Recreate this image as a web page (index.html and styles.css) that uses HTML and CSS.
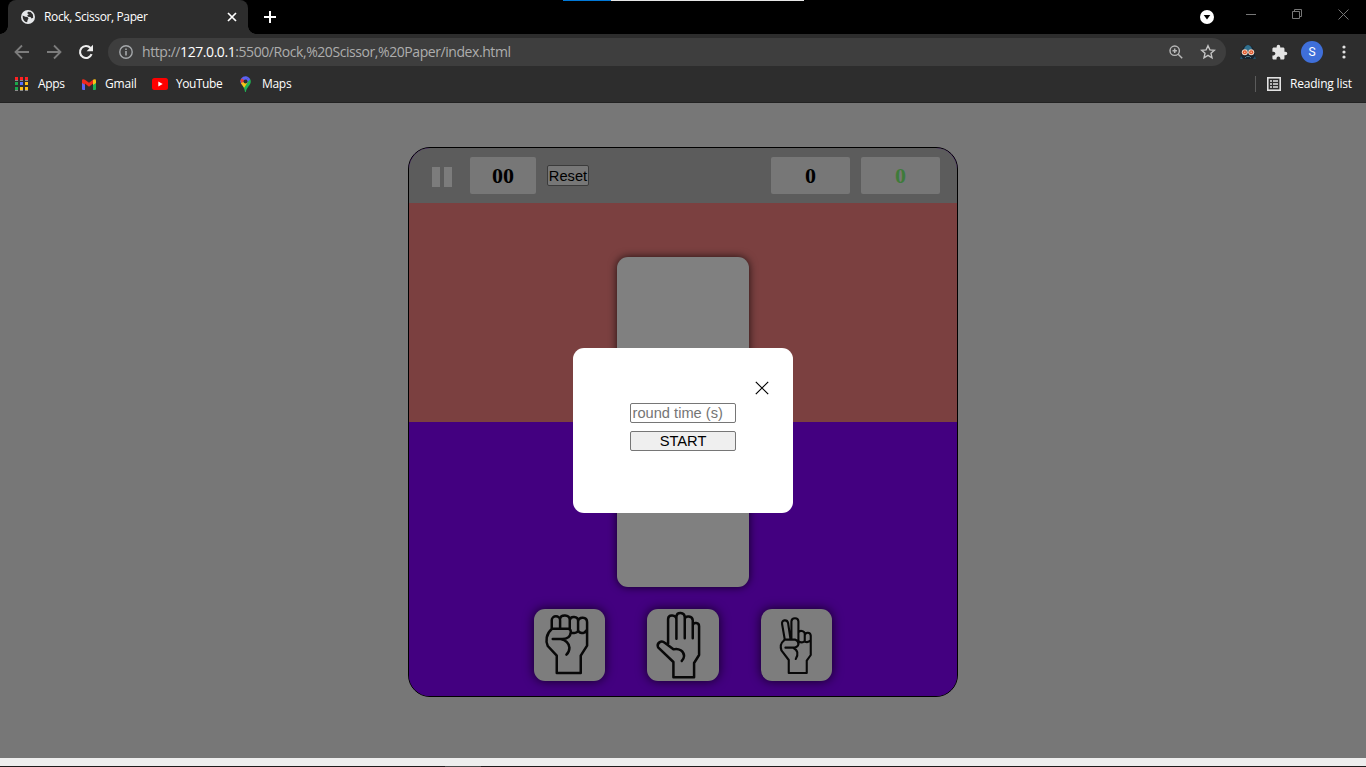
FILE: index.html
```html
<!DOCTYPE html>
<html lang="en">
<head>
<meta charset="utf-8">
<title>Rock, Scissor, Paper</title>
<link rel="stylesheet" href="styles.css">
</head>
<body>
<header class="browser">
  <div class="tabstrip">
    <div class="tab">
      <svg class="tab-icon" viewBox="0 0 14 14"><circle cx="7" cy="7" r="7" fill="#e6e8ea"/><path d="M1.700 5.500l2.500 1.300 2.300.3 1 1.400-.8 1.300-.6 2.500C3.400 12 1.500 9.500 1.700 5.500zM7 1.700l2.700.3 2.200 2.500.3 3.200-1.700.8-1-1.500-2.500-.3-.8-1.300 1.600-1.100-1.600-1z" fill="#2d2d2d"/></svg>
      <span class="tab-title">Rock, Scissor, Paper</span>
      <svg class="tab-close" viewBox="0 0 10 10"><path d="M1 1l8 8M9 1L1 9" stroke="#fff" stroke-width="1.700"/></svg>
    </div>
    <svg class="newtab" viewBox="0 0 12 12"><path d="M6 0v12M0 6h12" stroke="#fff" stroke-width="2"/></svg>
    <div class="loadbar"></div>
    <div class="window-controls">
      <svg width="14" height="14" viewBox="0 0 14 14" class="media"><circle cx="7" cy="7" r="7" fill="#fff"/><path d="M3.700 5h6.600L7 9.500z" fill="#000"/></svg>
      <svg width="11" height="11" viewBox="0 0 11 11" class="ctl"><path d="M0 5.500h10"/></svg>
      <svg width="11" height="11" viewBox="0 0 11 11" class="ctl"><path d="M.5 2.500h7v7h-7zM2.500 2.500v-2h7v7h-2"/></svg>
      <svg width="11" height="11" viewBox="0 0 11 11" class="ctl"><path d="M.5.500l10 10M10.500.500l-10 10"/></svg>
    </div>
  </div>
  <div class="toolbar">
    <svg class="nav" viewBox="0 0 16 16"><path d="M15 8H2M8 1.500L1.500 8 8 14.500" fill="none" stroke="#7c7c7c" stroke-width="1.800"/></svg>
    <svg class="nav" viewBox="0 0 16 16"><path d="M1 8h13M8 1.500L14.500 8 8 14.500" fill="none" stroke="#7c7c7c" stroke-width="1.800"/></svg>
    <svg class="nav" viewBox="0 0 16 16"><path d="M13.600 10.200A6 6 0 1 1 12.500 4" fill="none" stroke="#eee" stroke-width="2.100"/><path d="M15 .8v6.400H8.600z" fill="#eee"/></svg>
    <div class="omnibox">
      <svg class="info" viewBox="0 0 14 14"><circle cx="7" cy="7" r="6.200" fill="none" stroke="#a5a8ab" stroke-width="1.400"/><path d="M7 6v4.600M7 3.400v1.600" stroke="#a5a8ab" stroke-width="1.600"/></svg>
      <span class="url">http://<b>127.0.0.1</b>:5500/Rock,%20Scissor,%20Paper/index.html</span>
      <svg class="mag" viewBox="0 0 14 14"><circle cx="5.700" cy="5.700" r="4.700" fill="none" stroke="#b8b8b8" stroke-width="1.400"/><path d="M9.200 9.200l4 4M5.700 3.500v4.400M3.500 5.700h4.400" stroke="#b8b8b8" stroke-width="1.500"/></svg>
      <svg class="star" viewBox="0 0 16 16"><path d="M8 1.700l1.900 4.200 4.500.4-3.400 3 1 4.500-4-2.400-4 2.400 1-4.500-3.400-3 4.500-.4z" fill="none" stroke="#c4c4c4" stroke-width="1.400"/></svg>
    </div>
    <svg class="ext" viewBox="0 0 16 14"><path d="M0 14L2.500 4C4 1 6 0 8 0s4 1 5.500 4L16 14z" fill="#17232f"/><path d="M4 4c1-3 2.500-4 4-4s3 1 4 4L8 6z" fill="#31708e"/><path d="M1 11l-1 3h3zM15 11l1 3h-3z" fill="#265066"/><circle cx="4.800" cy="7.200" r="3" fill="#f2d7c5"/><circle cx="11.200" cy="7.200" r="3" fill="#f2d7c5"/><circle cx="4.800" cy="7.200" r="2" fill="#e2552b"/><circle cx="11.200" cy="7.200" r="2" fill="#e2552b"/><circle cx="4.800" cy="7.200" r=".8" fill="#f9c9a8"/><circle cx="11.200" cy="7.200" r=".8" fill="#f9c9a8"/><path d="M5 13l1.500-1.500h3L11 13" stroke="#4c7485" fill="none"/></svg>
    <svg class="puzzle" viewBox="0 0 24 24"><path d="M20.500 11H19V7c0-1.100-.9-2-2-2h-4V3.500a2.500 2.500 0 0 0-5 0V5H4c-1.100 0-2 .9-2 2v3.800h1.500c1.500 0 2.700 1.200 2.700 2.700S5 16.200 3.500 16.200H2V20c0 1.100.9 2 2 2h3.800v-1.500c0-1.500 1.200-2.700 2.700-2.700s2.700 1.200 2.700 2.700V22H17c1.100 0 2-.9 2-2v-4h1.500a2.500 2.500 0 0 0 0-5z" fill="#e4e4e4"/></svg>
    <div class="avatar">S</div>
    <svg class="dots" viewBox="0 0 4 14"><g fill="#e0e0e0"><circle cx="2" cy="2" r="1.600"/><circle cx="2" cy="7" r="1.600"/><circle cx="2" cy="12" r="1.600"/></g></svg>
  </div>
  <nav class="bookmarks">
    <svg class="bm-apps" viewBox="0 0 13 14"><g><path d="M0 0h3v3H0zM5 0h3v3H5zM10 0h3v3h-3z" fill="#f22"/><path d="M0 5h3v3H0z" fill="#1ba94c"/><path d="M5 5h3v3H5z" fill="#5271ff"/><path d="M10 5h3v3h-3z" fill="#fbc116"/><path d="M0 10h3v3H0z" fill="#1ba94c"/><path d="M5 10h3v3H5zM10 10h3v3h-3z" fill="#fbc116"/><path d="M0 3h3v1H0zM5 3h3v1H5zM10 3h3v1h-3zM0 13h3v1H0zM5 13h3v1H5zM10 13h3v1h-3z" fill="#8b8b8b"/></g></svg>
    <span class="bm-text t-apps">Apps</span>
    <svg class="bm-gmail" viewBox="0 0 14 11"><path d="M0 2l3 2v7H1a1 1 0 0 1-1-1z" fill="#5b62f5"/><path d="M14 2l-3 2v7h2a1 1 0 0 0 1-1z" fill="#20b254"/><path d="M0 4V1.600C0 0 1.500-.3 3 .8l4 3 4-3v3.800L7 7.800 3 4.600v1.200z" fill="#f02a1d"/><path d="M11 .8C12.500-.3 14 0 14 1.600V4l-3 2z" fill="#fbc116"/></svg>
    <span class="bm-text t-gmail">Gmail</span>
    <svg class="bm-yt" viewBox="0 0 16 12"><rect width="16" height="12" rx="2.500" fill="#f00"/><path d="M6.300 3.400v5.200L10.700 6z" fill="#fff"/></svg>
    <span class="bm-text t-yt">YouTube</span>
    <svg class="bm-maps" viewBox="0 0 11 16"><path d="M.2 5.500A5.300 5.300 0 0 1 8.500 1.200L2 8.700A6 6 0 0 1 .2 5.500z" fill="#5b62f5"/><path d="M.4 4.200L2 2.400l2.500 2L1.500 7.700z" fill="#ea3c30"/><path d="M10.200 3.200c.4.700.6 1.500.6 2.300 0 4-4.200 5.400-4.900 10.200-.3.500-.7.400-.9 0C4.600 13 3.500 11 2 8.700z" fill="#20b254"/><path d="M8.500 1.200a5.300 5.300 0 0 1 1.700 2L6 8 4 6z" fill="#5b62f5"/><path d="M.8 7L4 6l3.500.5-3.300 5.200L2 8.700z" fill="#fbc116"/><circle cx="5.500" cy="5.400" r="2" fill="#2d2d2d"/></svg>
    <span class="bm-text t-maps">Maps</span>
    <div class="reading">
      <svg viewBox="0 0 14 14"><rect x=".8" y=".8" width="12.400" height="12.400" fill="none" stroke="#e2e2e2" stroke-width="1.600"/><path d="M3 4h2M6 4h5M3 7h2M6 7h5M3 10h2M6 10h5" stroke="#e2e2e2" stroke-width="1.700"/></svg>
      <span class="bm-text t-reading">Reading list</span>
    </div>
  </nav>
</header>
<main class="page">
  <section class="game">
    <div class="scorebar">
      <div class="pause"><i></i><i></i></div>
      <div class="timer">00</div>
      <button class="reset">Reset</button>
      <div class="score">0</div>
      <div class="score player">0</div>
    </div>
    <div class="arena">
      <div class="slots"></div>
      <div class="choices">
        <button class="choice" aria-label="Rock"><svg viewBox="42 42 214 216"><path d="M110 182L83 153C76 139 78 116 95 102V76C95 60 120 60 120 76V101M120 72C122 58 148 58 149 74V102M149 76C151 61 174 64 174 77V108M174 80C176 64 201 64 201 82V152L182 182V234H110V182M95 101H142Q152 101 152 109V112M98 132H126Q150 132 152 112C158 116 173 114 174 107Q180 118 194 112L201 104M122 132C139 136 147 147 148 158Q148 170 139 179" stroke-width="7.500"/></svg></button>
        <button class="choice" aria-label="Paper"><svg viewBox="52 42 214 216"><path d="M131 201L85 157C80 145 94 134 105 143L131 163C147 158 163 169 163 183Q162 193 156 198M115 148V72C116 57 139 59 140 73V131M140 72V64C142 50 164 51 165 66V130M165 72C167 61 188 62 189 76V130M189 91C191 81 208 82 208 94V180L193 204V247H131V201" stroke-width="7.500"/></svg></button>
        <button class="choice" aria-label="Scissor"><svg viewBox="48 42 214 216"><path d="M131 195L109 166Q103 148 115 138L119 133 111 87C109 74 126 72 129 84L136 131M139 132V79C140 67 159 66 160 79V148M160 113C163 104 178 107 179 116V140M179 121C181 110 196 111 197 122V180L185 197V234H131V195M118 134H151Q160 137 160 148Q157 158 143 158H121M144 158C158 164 161 178 152 192M160 138Q167 146 178 139Q188 145 197 136" stroke-width="6.300"/></svg></button>
      </div>
    </div>
  </section>
  <form class="modal">
    <svg class="modal-close" viewBox="0 0 14 14"><path d="M.8.800l12.400 12.400M13.200.800L.8 13.200" stroke="#000" stroke-width="1.200"/></svg>
    <input class="field" type="text" placeholder="round time (s)">
    <button class="start" type="button">START</button>
  </form>
</main>
<footer class="edge"></footer>
</body>
</html>
```
FILE: styles.css
```css
* { box-sizing: border-box; }
body { margin: 0; height: 767px; overflow: hidden; display: flex; flex-direction: column; background: #777; font-family: "Open Sans", "Noto Sans", sans-serif; }
svg { display: block; flex: none; }
button { padding: 0; margin: 0; }
.browser { height: 103px; flex: none; background: #2d2d2d; border-bottom: 1px solid #222; color: #fff; }
.tabstrip { position: relative; height: 34px; background: #000; display: flex; align-items: center; padding-left: 8px; }
.tab { position: relative; width: 240px; height: 34px; background: #2d2d2d; border-radius: 8px 8px 0 0; display: flex; align-items: center; padding: 0 11px 0 13px; }
.tab::before, .tab::after { content: ""; position: absolute; bottom: 0; width: 8px; height: 8px; }
.tab::before { left: -8px; background: radial-gradient(circle at 0 0, #000 7.5px, #2d2d2d 8px); }
.tab::after { right: -8px; background: radial-gradient(circle at 100% 0, #000 7.5px, #2d2d2d 8px); }
.tab-icon { width: 14px; height: 14px; }
.tab-title { margin-left: 9px; padding-bottom: 1px; font-size: 12px; letter-spacing: -.37px; white-space: nowrap; }
.tab-close { width: 10px; height: 10px; margin-left: auto; }
.newtab { width: 12px; height: 12px; margin-left: 16px; }
.loadbar { position: absolute; left: 563px; top: 0; width: 241px; height: 1px; background: linear-gradient(90deg, #0078d7 48px, #e6e6e6 48px); }
.window-controls { margin-left: auto; display: flex; align-items: center; gap: 35px; padding-right: 17px; height: 34px; }
.media { margin-right: -3px; }
.ctl { margin-bottom: 6px; fill: none; stroke: #777; stroke-width: 1; }
.toolbar { height: 36px; display: flex; align-items: center; padding-left: 14px; }
.nav { width: 16px; height: 16px; margin-right: 16px; }
.omnibox { width: 1118px; height: 28px; margin-left: -2px; border-radius: 14px; background: #3e3e3e; display: flex; align-items: center; padding: 0 10px 0 11px; }
.info { width: 14px; height: 14px; }
.url { margin-left: 9px; padding-bottom: 1px; font-size: 14px; letter-spacing: -.43px; color: #adadad; white-space: nowrap; }
.url b { font-weight: 400; color: #fff; }
.mag { width: 14px; height: 14px; margin-left: auto; }
.star { width: 16px; height: 16px; margin-left: 17px; }
.ext { width: 16px; height: 14px; margin-left: 14px; }
.puzzle { width: 17px; height: 17px; margin-left: 15px; }
.avatar { width: 22px; height: 22px; margin-left: 13px; border-radius: 50%; background: #3f6fd9; font: 12px/22px Roboto, sans-serif; text-align: center; }
.dots { width: 4px; height: 14px; margin-left: 19px; }
.bookmarks { height: 32px; display: flex; align-items: center; padding: 0 14px 4px 15px; }
.bm-text { padding-bottom: 1px; font-size: 12px; white-space: nowrap; letter-spacing: -.3px; }
.bm-apps { width: 13px; height: 14px; margin-right: 10px; }
.t-apps { width: 44px; }
.bm-gmail { width: 14px; height: 11px; margin-right: 9px; }
.t-gmail { width: 47px; letter-spacing: -.2px; }
.bm-yt { width: 16px; height: 12px; margin-right: 8px; }
.t-yt { width: 64px; letter-spacing: -.45px; }
.bm-maps { width: 11px; height: 16px; margin-right: 11px; }
.reading { margin-left: auto; height: 16px; display: flex; align-items: center; border-left: 1px solid #5b5b5b; padding-left: 11px; }
.reading svg { width: 14px; height: 14px; margin-right: 9px; }
.t-reading { width: 62px; letter-spacing: -.2px; }
.page { position: relative; flex: 1; display: flex; justify-content: center; align-items: flex-start; padding-top: 44px; }
.game { width: 550px; height: 550px; border: 1px solid #000; border-radius: 22px; overflow: hidden; background: #430080; }
.scorebar { height: 55px; display: flex; align-items: center; padding: 0 17px 0 23px; background: #5c5c5c; font: bold 22px "Liberation Serif", serif; color: #000; }
.pause { display: flex; gap: 4px; margin-top: 3px; }
.pause i { width: 8px; height: 20px; background: #7c7c7c; }
.timer, .score { height: 37px; line-height: 37px; border-radius: 2px; background: #777; text-align: center; }
.timer { width: 66px; margin-left: 18px; }
.score { width: 79px; }
.player { margin-left: 11px; color: #3e7b3a; }
.reset { width: 42px; height: 21px; margin: 0 auto 0 11px; border: 1px solid #3b3b3b; border-radius: 2px; background: #777; color: #000; font: 14.67px/20px "Liberation Sans", sans-serif; }
.arena { height: 493px; display: flex; flex-direction: column; align-items: center; padding-top: 54px; background: linear-gradient(#7b4040 219px, #430080 219px); }
.slots { width: 132px; height: 330px; border-radius: 11px; background: #808080; box-shadow: 0 0 9px rgba(0,0,0,.75); flex: none; }
.choices { display: flex; gap: 42px; margin-top: 22px; }
.choice { width: 71.500px; height: 72px; border: 0; border-radius: 11px; background: #7d7d7d; box-shadow: 0 0 11px rgba(0,0,0,.75); }
.choice svg { width: 100%; height: 100%; fill: none; stroke: #080808; stroke-linecap: round; stroke-linejoin: round; }
.modal { position: absolute; left: 573px; top: 245px; width: 220px; height: 165px; border-radius: 11px; background: #fff; display: flex; flex-direction: column; align-items: center; padding-top: 33px; }
.modal-close { width: 14px; height: 14px; align-self: flex-end; margin: 0 24px 8px 0; }
.field, .start { width: 106px; height: 20px; border: 1px solid #767676; border-radius: 2px; font: 14.67px/18px "Liberation Sans", sans-serif; }
.field { padding: 0 1.500px; background: #fff; }
.field::placeholder { color: #757575; opacity: 1; }
.start { margin-top: 8px; background: #efefef; color: #000; }
.edge { height: 9px; flex: none; background: linear-gradient(90deg, #1f1b1c 445px, #494949 445px, #494949 481px, #1f1b1c 481px) bottom / 100% 1px no-repeat #eee; }
```
